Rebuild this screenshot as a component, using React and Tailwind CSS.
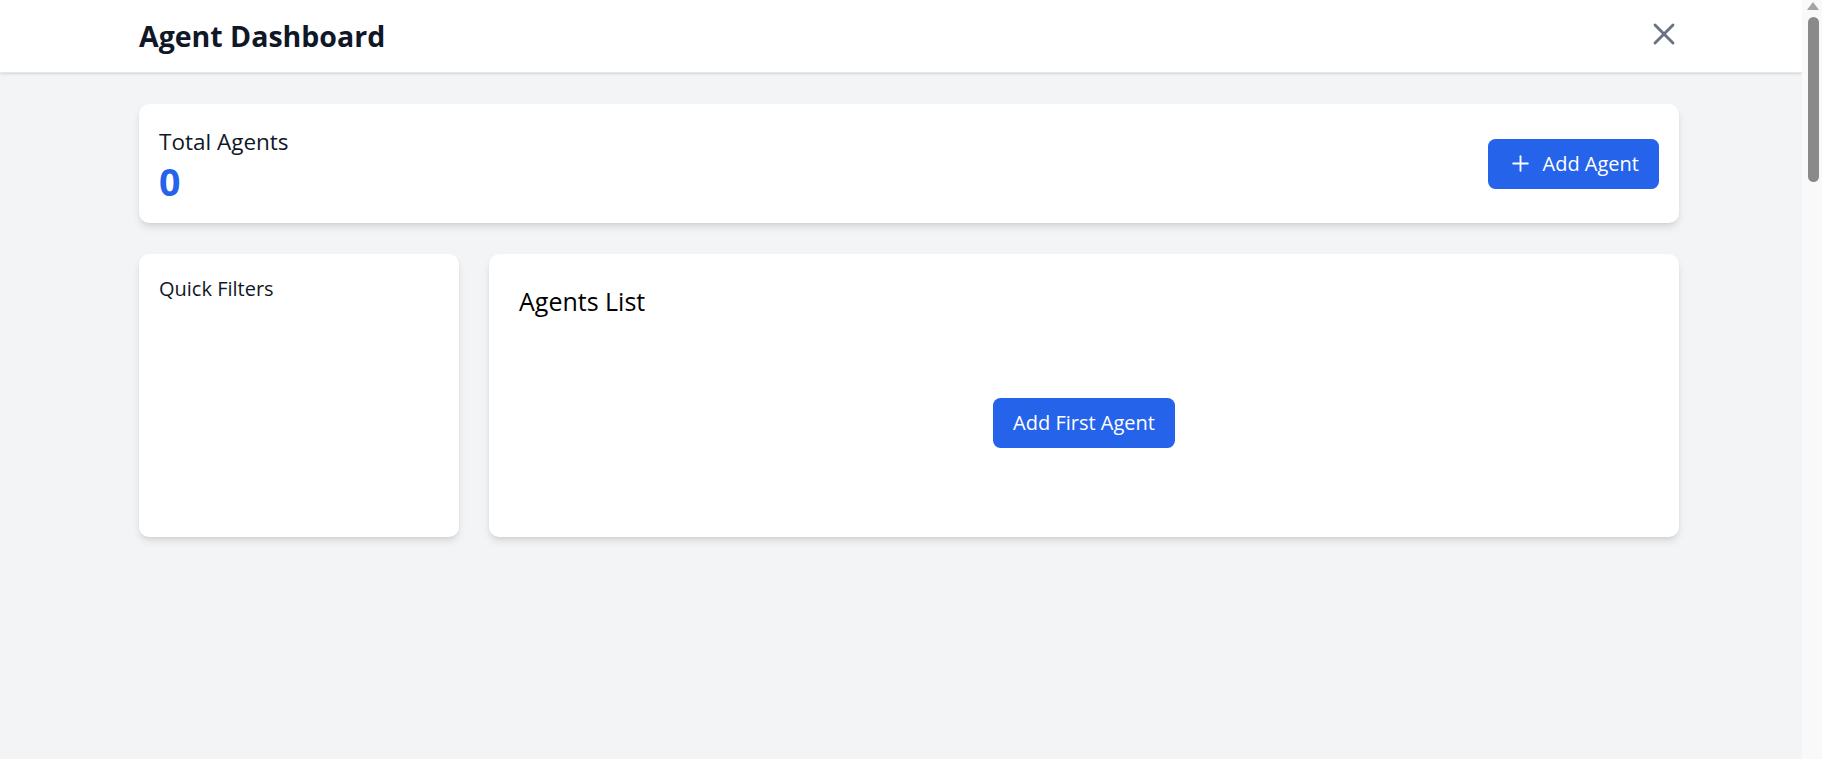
import { Plus, X } from 'lucide-react'

const card =
  'rounded-[10px] bg-white shadow-[0_5px_8px_-1px_rgba(0,0,0,0.1),0_2px_5px_-2px_rgba(0,0,0,0.1)]'

export default function App() {
  return (
    <div className="flex h-[759px] overflow-hidden bg-gray-100 font-[family-name:'Open_Sans',sans-serif]">
      <div className="flex-1">
        {/* top bar */}
        <header className="border-b border-gray-200 bg-white shadow-sm">
          <div className="ml-[139px] flex h-[72px] w-[1540px] items-center justify-between">
            <h1 className="text-[28.5px] font-bold leading-[40px] text-gray-900">Agent Dashboard</h1>
            <button className="-mr-[3px] mb-[5px] text-gray-500">
              <X size={36} strokeWidth={1.9} />
            </button>
          </div>
        </header>

        <main className="ml-[139px] w-[1540px] pt-[31px]">
          {/* summary */}
          <div className={`${card} flex h-[119px] items-center justify-between px-[20px]`}>
            <div>
              <p className="text-[22.5px] font-medium leading-[35px] text-gray-900">Total Agents</p>
              <p className="text-[37.5px] font-bold leading-[45px] text-[#2563eb]">0</p>
            </div>
            <button className="flex h-[50px] items-center gap-[10px] rounded-[7.5px] bg-[#2563eb] px-[20px] text-[20px] text-white">
              <Plus size={25} strokeWidth={1.8} />
              Add Agent
            </button>
          </div>

          <div className="mt-[31px] flex gap-[30px]">
            <aside className={`${card} w-[320px] p-[20px]`}>
              <h3 className="text-[20px] font-medium leading-[30px] text-gray-900">Quick Filters</h3>
            </aside>

            <section className={`${card} flex-1 p-[30px]`}>
              <h2 className="mb-[20px] text-[25px] font-medium leading-[35px] text-black">Agents List</h2>
              <div className="flex justify-center py-[59px]">
                <button className="h-[50px] rounded-[7.5px] bg-[#2563eb] px-[20px] text-[20px] text-white">
                  Add First Agent
                </button>
              </div>
            </section>
          </div>
        </main>
      </div>

      {/* page scrollbar */}
      <div className="flex w-[20px] flex-col items-center bg-[#f9f9f9] pt-[2px]">
        <svg width="12" height="8" viewBox="0 0 12 8" className="ml-[1px]">
          <path d="M6 0 L12 8 L0 8 Z" fill="#a3a3a3" />
        </svg>
        <div className="ml-[2px] mt-[7px] h-[165px] w-[11px] rounded-full bg-[#8a8a8a]" />
      </div>
    </div>
  )
}
